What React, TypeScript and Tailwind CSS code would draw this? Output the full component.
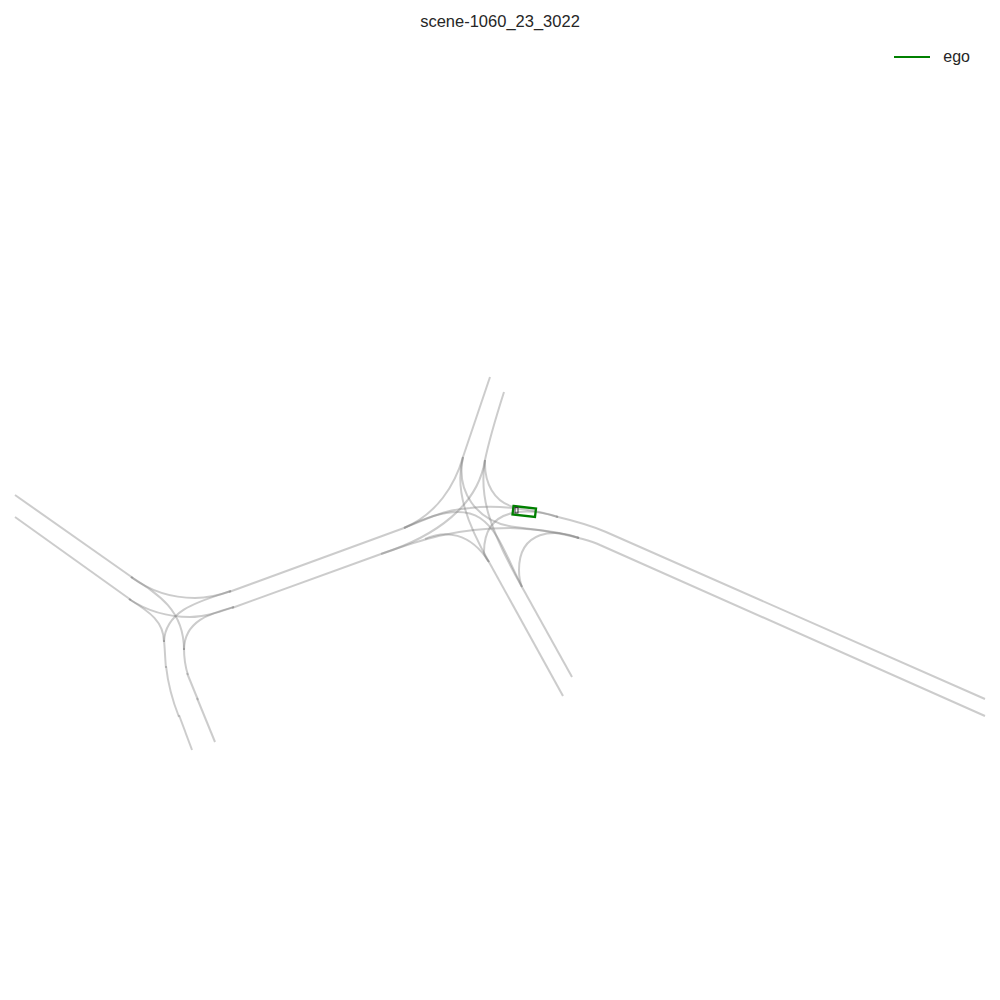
const ROADS = [
  // west arms
  "M15 495 L133 578",
  "M15 517 L131 600",
  // west junction
  "M131 577 C150 591 172 598 195 598 C209 598 220 595 231 591",
  "M129 599 C147 611 168 617 190 617 C205 617 219 612 234 607",
  "M131 577 C158 594 184 610 184 650",
  "M129 599 C150 612 164 622 164 642",
  "M231 591 C200 601 165 610 164 642",
  "M234 607 C212 613 184 620 184 650",
  // link between junctions
  "M229 592 L404 528",
  "M232 608 L381 554",
  // south-west arm
  "M164 640 C165 650 165 658 166 668",
  "M166 666 C168 684 173 702 179 717",
  "M179 715 L192 750",
  "M184 648 C184 660 185 666 188 675",
  "M187 673 L198 700",
  "M197 698 L215 742",
  // north arm
  "M490 377 L463 457",
  "M504 392 C497 414 490 436 485 460",
  // south arm
  "M522 587 L572 677",
  "M489 562 L563 696",
  // east arm
  "M556 516.5 C575 521 590 525 606 532 L985 699",
  "M577 537.5 C586 540 592 541 600 545 L985 716",
  // main junction
  "M463 457 C455 485 437 514 404 528",
  "M485 460 C478 505 437 536 381 554",
  "M463 457 C454 490 468 525 489 562",
  "M485 460 C479 495 488 527 522 587",
  "M485 460 C484 483 494 502 514 507",
  "M404 528 C430 518 442 510 470 508 C495 505 530 508 558 517",
  "M381 554 C420 540 455 528 510 528 C540 529 560 532 579 538",
  "M463 457 C456 490 475 522 515 527 C540 530 560 533 579 538",
  "M558 517 C530 508 484 505 484 552 C484 556 486 558 489 562",
  "M579 538 C555 528 519 530 519 570 C519 577 520 582 522 587",
  "M489 562 C470 532 445 530 425 539",
  "M522 587 C505 553 498 530 480 518 C465 508 440 510 404 528",
];

export default function App() {
  return (
    <div className="w-[1000px] h-[1000px] bg-white flex flex-col font-['Liberation_Sans',sans-serif] text-[#262626] overflow-hidden">
      <h1 className="h-[44px] pt-[12px] text-center text-[16.5px] leading-[18px] font-normal">
        scene-1060_23_3022
      </h1>
      <div className="h-[36px] pr-[30px] flex justify-end items-center gap-[13px] text-[16px] leading-[18px] -mt-[5px]">
        <span className="w-[36px] h-[2px] bg-[#008000]" />
        <span>ego</span>
      </div>
      <svg viewBox="0 75 1000 925" className="w-[1000px] h-[925px]" fill="none">
        {ROADS.map((d, i) => (
          <path key={i} d={d} stroke="#808080" strokeOpacity={0.4} strokeWidth={2} />
        ))}
        <polygon points="513.5,506 536,508.5 535,517 512.5,514.5" stroke="#008000" strokeWidth={2.3} />
        <rect x="515" y="507.5" width="3" height="5.5" stroke="#333333" strokeWidth={1} />
      </svg>
    </div>
  );
}
